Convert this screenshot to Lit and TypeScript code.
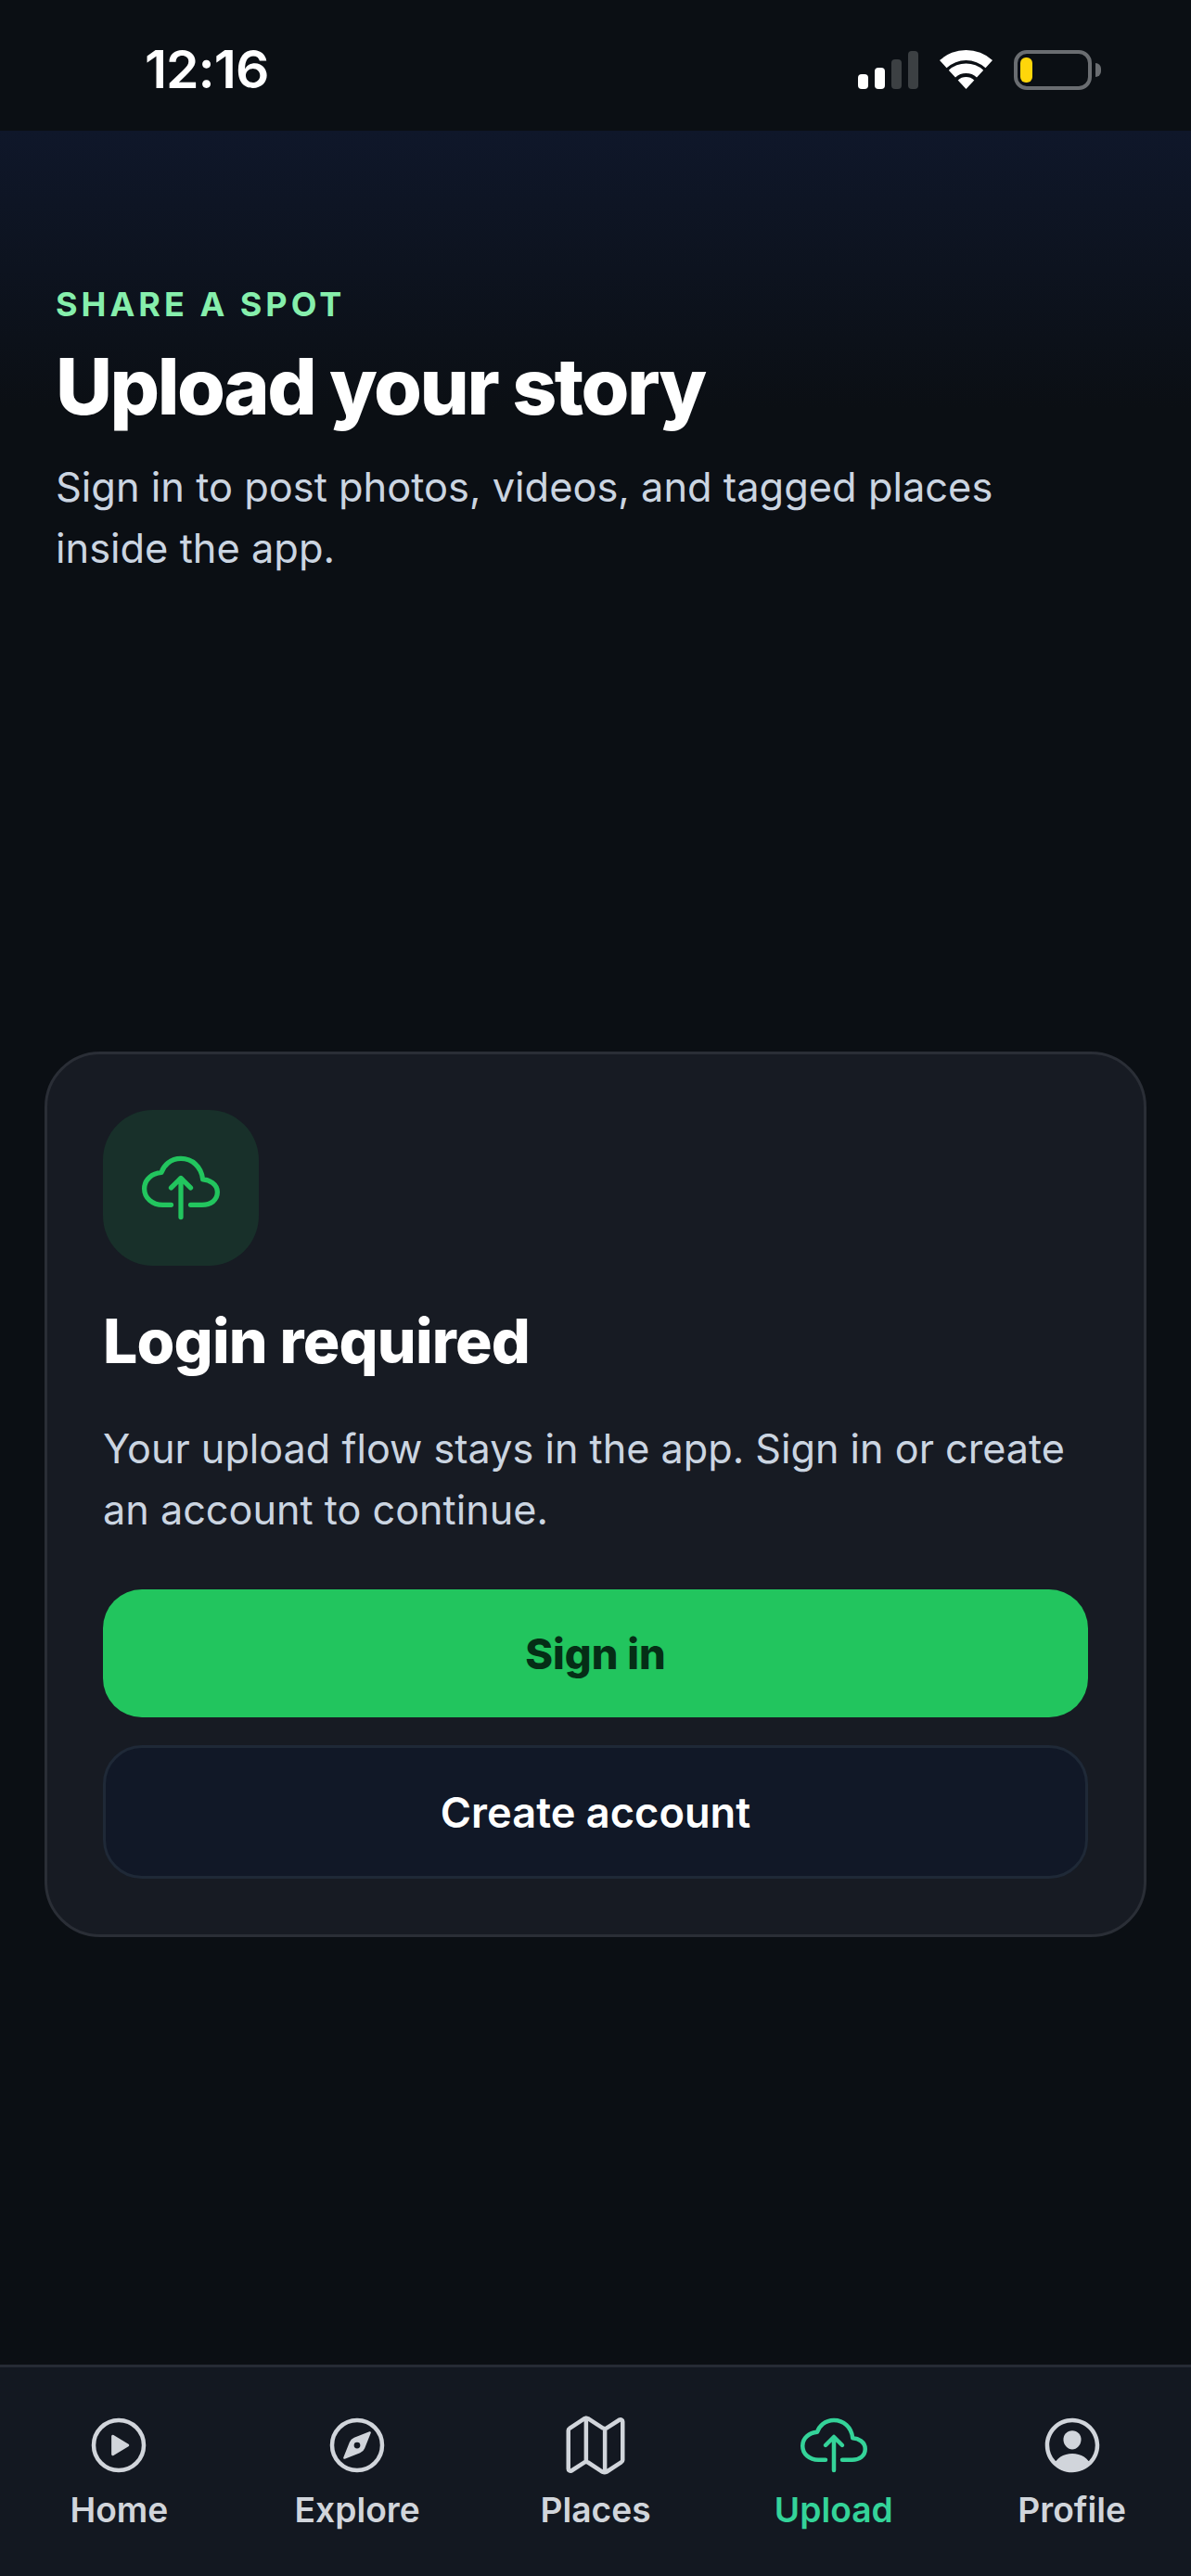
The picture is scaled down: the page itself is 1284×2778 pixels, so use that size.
import { LitElement, html, css, svg } from "lit";
import { customElement } from "lit/decorators.js";

const CIRCLE = "M448 256c0-106-86-192-192-192S64 150 64 256s86 192 192 192 192-86 192-192z";

const cloud = html`<svg viewBox="0 0 512 512" class="line">
  <path d="M320 367.79h76c55 0 100-29.21 100-83.6 0-53.75-53-81.25-96-83.6-8.89-85.06-71-136.8-144-136.8-69 0-113.44 45.79-128 91.2-60 5.7-112 43.88-112 106.4s54 106.4 120 106.4h56"/>
  <path d="M320 255.79l-64-64-64 64M256 448.21V207.79"/>
</svg>`;

const icons: Record<string, unknown> = {
  Home: html`<svg viewBox="0 0 512 512" class="line">
    <path d=${CIRCLE}/>
    <path class="solid" d="M216.32 334.44l114.45-69.14a10.89 10.89 0 000-18.6l-114.45-69.14a10.78 10.78 0 00-16.32 9.31v138.26a10.78 10.78 0 0016.32 9.31z"/>
  </svg>`,
  Explore: html`<svg viewBox="0 0 512 512" class="line">
    <path d=${CIRCLE}/>
    <path class="solid" d="M350.67 150.93l-117.2 46.88a64 64 0 00-35.66 35.66l-46.88 117.2a8 8 0 0010.4 10.4l117.2-46.88a64 64 0 0035.66-35.66l46.88-117.2a8 8 0 00-10.4-10.4zM256 280a24 24 0 1124-24 24 24 0 01-24 24z"/>
  </svg>`,
  Places: html`<svg viewBox="0 0 512 512" class="line">
    <path d="M313.27 124.64L198.73 51.36a32 32 0 00-29.28.35L56.51 127.49A16 16 0 0048 141.63v295.8a16 16 0 0023.49 14.14l97.82-63.79a32 32 0 0129.5-.24l111.86 73a32 32 0 0029.27-.11l115.43-75.94a16 16 0 008.63-14.2V74.57a16 16 0 00-23.49-14.14l-98 63.86a32 32 0 01-29.24.35zM328 128v336M184 48v336"/>
  </svg>`,
  Upload: cloud,
  Profile: html`<svg viewBox="0 0 512 512" class="fill">
    <path d="M258.9 48C141.92 46.42 46.42 141.92 48 258.9c1.56 112.19 92.91 203.54 205.1 205.1 117 1.6 212.48-93.9 210.88-210.88C462.44 140.91 371.09 49.56 258.9 48zm126.42 327.25a4 4 0 01-6.14-.32 124.27 124.27 0 00-32.35-29.59C321.37 329 289.11 320 256 320s-65.37 9-90.83 25.34a124.24 124.24 0 00-32.35 29.58 4 4 0 01-6.14.32A175.32 175.32 0 0180 259c-1.63-97.31 78.22-178.76 175.57-179S432 158.81 432 256a175.32 175.32 0 01-46.68 119.25z"/>
    <path d="M256 144c-19.72 0-37.55 7.39-50.22 20.82s-19 32-17.57 51.93C191.11 256 221.52 288 256 288s64.83-32 67.79-71.25c1.48-19.74-4.8-38.14-17.68-51.82C293.39 151.44 275.59 144 256 144z"/>
  </svg>`,
};

const wifi = svg`<path d="M0 11.1A42 42 0 0 1 57 11.1L49.5 19.2A31 31 0 0 0 7.5 19.2Z"/><path d="M9.8 21.8A27.5 27.5 0 0 1 47.2 21.8L40 29.5A17 17 0 0 0 17 29.5Z"/><path d="M19.7 32.4A13 13 0 0 1 37.3 32.4L28.5 42Z"/>`;

@customElement("app-root")
export class AppRoot extends LitElement {
  static styles = css`
    :host {
      display: block;
      width: 1284px;
      height: 2778px;
      background: #0b0f14;
      font-family: Inter, "Liberation Sans", sans-serif;
      color: #fff;
    }
    .page {
      height: 100%;
      display: flex;
      flex-direction: column;
    }
    .status {
      height: 141px;
      flex: none;
      background: #0b0f14;
      display: flex;
      justify-content: space-between;
      box-sizing: border-box;
      padding: 54px 97px 0 156px;
    }
    .time {
      font-size: 57px;
      line-height: 42px;
      font-weight: 600;
      letter-spacing: -1px;
    }
    .indicators {
      display: flex;
      align-items: flex-start;
      height: 43px;
    }
    .signal {
      display: flex;
      align-items: flex-end;
      gap: 7px;
      height: 42px;
      margin-right: 23px;
    }
    .signal i {
      width: 11px;
      border-radius: 4px;
      background: #fff;
    }
    .signal i.off {
      background: #3c4043;
    }
    .wifi {
      width: 57px;
      height: 42px;
      fill: #fff;
      margin-right: 23px;
      overflow: visible;
    }
    .battery {
      box-sizing: border-box;
      width: 84px;
      height: 43px;
      border: 4px solid #6a6d71;
      border-radius: 14px;
      padding: 4px 3px;
    }
    .battery i {
      display: block;
      width: 13px;
      height: 27px;
      border-radius: 6px;
      background: #ffd60a;
    }
    .nub {
      width: 6px;
      height: 15px;
      margin: 14px 0 0 4px;
      border-radius: 0 8px 8px 0;
      background: #6a6d71;
    }
    main {
      flex: 1;
      min-height: 0;
      background: linear-gradient(180deg, #0f172a 0, #0b0f14 300px);
      padding: 0 48px;
      display: flex;
      flex-direction: column;
    }
    .eyebrow {
      margin: 163px 0 0 12px;
      font-size: 36px;
      line-height: 48px;
      font-weight: 700;
      letter-spacing: 4px;
      color: #86efac;
    }
    h1 {
      margin: 17px 0 0 12px;
      font-size: 84px;
      line-height: 96px;
      font-weight: 800;
      letter-spacing: -2.5px;
    }
    .lede {
      margin: 27px 0 0 12px;
      font-size: 43.4px;
      line-height: 66px;
      font-weight: 400;
      color: #cbd5e1;
    }
    .card {
      margin-top: 510px;
      border: 3px solid #2a2e36;
      border-radius: 60px;
      background: #171b23;
      padding: 60px;
      display: flex;
      flex-direction: column;
    }
    .badge {
      width: 168px;
      height: 168px;
      border-radius: 54px;
      background: #18302a;
      display: flex;
      align-items: center;
      justify-content: center;
      color: #22c55e;
    }
    .badge svg {
      width: 84px;
      height: 84px;
    }
    h2 {
      margin: 42px 0 0;
      font-size: 66px;
      line-height: 78px;
      font-weight: 800;
      letter-spacing: -0.8px;
    }
    .card p {
      margin: 44px 0 0;
      font-size: 43.2px;
      line-height: 66px;
      color: #cbd5e1;
    }
    .btn {
      display: flex;
      align-items: center;
      justify-content: center;
      box-sizing: border-box;
      border-radius: 42px;
      font-size: 45.2px;
    }
    .primary {
      margin-top: 53px;
      height: 138px;
      background: #22c55e;
      color: #052e16;
      font-weight: 800;
    }
    .secondary {
      margin-top: 30px;
      height: 144px;
      background: #111827;
      border: 3px solid #1f2937;
      color: #fff;
      font-weight: 600;
    }
    nav {
      flex: none;
      height: 228px;
      box-sizing: border-box;
      border-top: 3px solid #262b35;
      background: #131821;
      display: grid;
      grid-template-columns: repeat(5, 1fr);
    }
    .tab {
      display: flex;
      flex-direction: column;
      align-items: center;
      padding-top: 48px;
      color: #d1d5db;
      font-size: 37.2px;
      line-height: 48px;
      font-weight: 600;
    }
    .tab.active {
      color: #34d399;
    }
    .tab svg {
      width: 72px;
      height: 72px;
      margin-bottom: 10px;
    }
    .line {
      fill: none;
      stroke: currentColor;
      stroke-width: 32;
      stroke-linecap: round;
      stroke-linejoin: round;
    }
    .line .solid {
      fill: currentColor;
      stroke: none;
    }
    .fill {
      fill: currentColor;
    }
  `;

  render() {
    return html`<div class="page">
      <header class="status">
        <div class="time">12:16</div>
        <div class="indicators">
          <div class="signal">
            <i style="height:16px"></i><i style="height:23px"></i
            ><i class="off" style="height:32px"></i><i class="off" style="height:41px"></i>
          </div>
          <svg class="wifi" viewBox="0 0 57 42">${wifi}</svg>
          <div class="battery"><i></i></div>
          <div class="nub"></div>
        </div>
      </header>
      <main>
        <div class="eyebrow">SHARE A SPOT</div>
        <h1>Upload your story</h1>
        <div class="lede">Sign in to post photos, videos, and tagged places<br />inside the app.</div>
        <section class="card">
          <div class="badge">${cloud}</div>
          <h2>Login required</h2>
          <p>Your upload flow stays in the app. Sign in or create<br />an account to continue.</p>
          <div class="btn primary">Sign in</div>
          <div class="btn secondary">Create account</div>
        </section>
      </main>
      <nav>
        ${["Home", "Explore", "Places", "Upload", "Profile"].map(
          (t) => html`<div class="tab ${t === "Upload" ? "active" : ""}">${icons[t]}<span>${t}</span></div>`
        )}
      </nav>
    </div>`;
  }
}
